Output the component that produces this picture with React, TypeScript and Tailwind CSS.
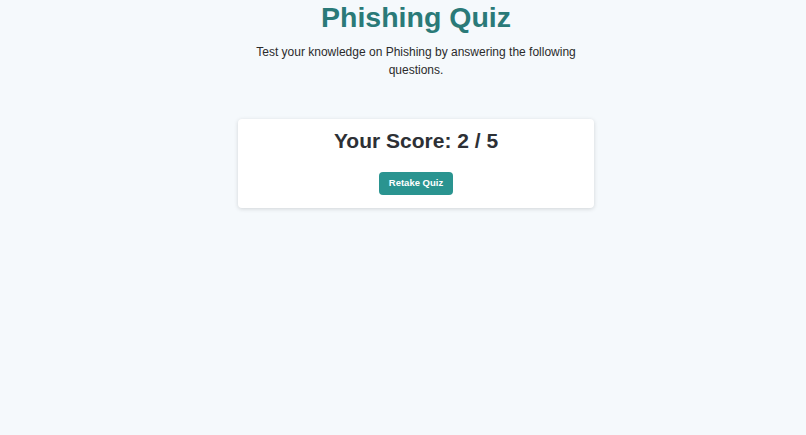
export default function App() {
  return (
    <div
      className="min-h-[435px] bg-[#f5f9fc] text-[#333333]"
      style={{ fontFamily: '"Liberation Sans", Arial, sans-serif' }}
    >
      <div className="flex flex-col items-center pl-[26px]">
        <h1 className="mt-[1px] text-[28.5px] font-bold leading-[32px] text-[#2a7a78]">Phishing Quiz</h1>
        <p className="mt-[10px] w-[330px] text-center text-[12px] leading-[18px] text-[#2b2b2b]">
          Test your knowledge on Phishing by answering the following questions.
        </p>
        <div className="mt-[40px] flex w-[356px] flex-col items-center rounded bg-white pb-[13px] pt-[8px] shadow-[0_1px_4px_rgba(0,0,0,0.15)]">
          <h2 className="text-[21px] font-bold leading-[28px] text-[#2d3035]">Your Score: 2 / 5</h2>
          <button className="mt-[17px] h-[23px] rounded bg-[#2a9490] px-[10px] text-[9.5px] font-bold text-white">
            Retake Quiz
          </button>
        </div>
      </div>
    </div>
  )
}
